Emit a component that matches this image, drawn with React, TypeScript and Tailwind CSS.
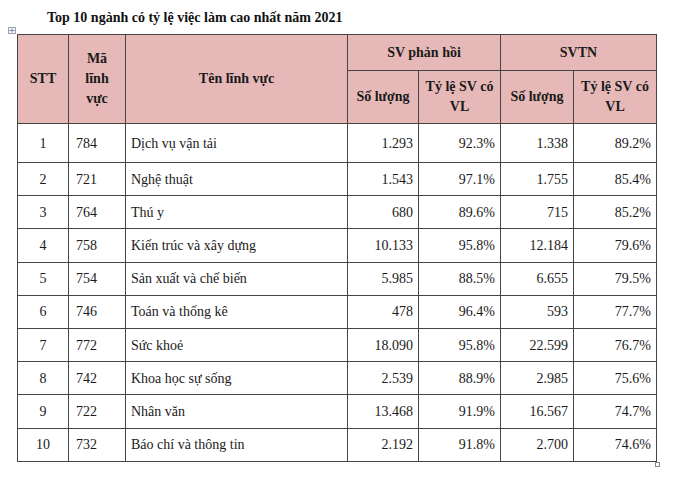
const rows = [
  { stt: "1", ma: "784", ten: "Dịch vụ vận tải", sl1: "1.293", tl1: "92.3%", sl2: "1.338", tl2: "89.2%" },
  { stt: "2", ma: "721", ten: "Nghệ thuật", sl1: "1.543", tl1: "97.1%", sl2: "1.755", tl2: "85.4%" },
  { stt: "3", ma: "764", ten: "Thú y", sl1: "680", tl1: "89.6%", sl2: "715", tl2: "85.2%" },
  { stt: "4", ma: "758", ten: "Kiến trúc và xây dựng", sl1: "10.133", tl1: "95.8%", sl2: "12.184", tl2: "79.6%" },
  { stt: "5", ma: "754", ten: "Sản xuất và chế biến", sl1: "5.985", tl1: "88.5%", sl2: "6.655", tl2: "79.5%" },
  { stt: "6", ma: "746", ten: "Toán và thống kê", sl1: "478", tl1: "96.4%", sl2: "593", tl2: "77.7%" },
  { stt: "7", ma: "772", ten: "Sức khoẻ", sl1: "18.090", tl1: "95.8%", sl2: "22.599", tl2: "76.7%" },
  { stt: "8", ma: "742", ten: "Khoa học sự sống", sl1: "2.539", tl1: "88.9%", sl2: "2.985", tl2: "75.6%" },
  { stt: "9", ma: "722", ten: "Nhân văn", sl1: "13.468", tl1: "91.9%", sl2: "16.567", tl2: "74.7%" },
  { stt: "10", ma: "732", ten: "Báo chí và thông tin", sl1: "2.192", tl1: "91.8%", sl2: "2.700", tl2: "74.6%" },
];

const cell = "border border-[#454545] p-0";
const head = `${cell} bg-[#e6b9b8] text-center font-bold leading-[20px]`;

export default function App() {
  return (
    <div
      className="relative h-[481px] w-[680px] bg-white text-[14px] text-[#1a1a1a]"
      style={{ fontFamily: '"Liberation Serif", "Times New Roman", serif' }}
    >
      <div className="pl-[47px] pt-[8px] text-[14px] font-bold leading-[20px] text-[#111]">
        Top 10 ngành có tỷ lệ việc làm cao nhất năm 2021
      </div>

      <span className="absolute left-[8px] top-[27px] flex h-[7px] w-[8px] items-center justify-center border border-[#9aa4b5] bg-[#f4f6fa]">
        <svg width="6" height="5" viewBox="0 0 6 5" fill="none" stroke="#6b7a96" strokeWidth="0.8">
          <path d="M3 0.3V4.7M0.3 2.5H5.7" />
        </svg>
      </span>

      <div className="pl-[17px] pt-[6px]">
        <table className="w-[639px] table-fixed border-collapse">
          <colgroup>
            <col className="w-[51px]" />
            <col className="w-[57px]" />
            <col className="w-[222px]" />
            <col className="w-[71px]" />
            <col className="w-[82px]" />
            <col className="w-[73px]" />
            <col className="w-[83px]" />
          </colgroup>
          <thead>
            <tr className="h-[36px]">
              <th rowSpan={2} className={head}>STT</th>
              <th rowSpan={2} className={head}>
                Mã
                <br />
                lĩnh
                <br />
                vực
              </th>
              <th rowSpan={2} className={head}>Tên lĩnh vực</th>
              <th colSpan={2} className={head}>SV phản hồi</th>
              <th colSpan={2} className={head}>SVTN</th>
            </tr>
            <tr className="h-[53px]">
              <th className={head}>Số lượng</th>
              <th className={head}>
                Tỷ lệ SV có
                <br />
                VL
              </th>
              <th className={head}>Số lượng</th>
              <th className={head}>
                Tỷ lệ SV có
                <br />
                VL
              </th>
            </tr>
          </thead>
          <tbody>
            {rows.map((r, i) => (
              <tr key={r.stt} className={i === 0 ? "h-[39px]" : "h-[33.2px]"}>
                <td className={`${cell} text-center`}>{r.stt}</td>
                <td className={`${cell} pl-[7px]`}>{r.ma}</td>
                <td className={`${cell} pl-[5px]`}>{r.ten}</td>
                <td className={`${cell} pr-[5px] text-right`}>{r.sl1}</td>
                <td className={`${cell} pr-[5px] text-right`}>{r.tl1}</td>
                <td className={`${cell} pr-[5px] text-right`}>{r.sl2}</td>
                <td className={`${cell} pr-[5px] text-right`}>{r.tl2}</td>
              </tr>
            ))}
          </tbody>
        </table>
      </div>

      <span className="absolute left-[655px] top-[462px] h-[5px] w-[5px] border border-[#8a8a8a] bg-white" />
    </div>
  );
}
